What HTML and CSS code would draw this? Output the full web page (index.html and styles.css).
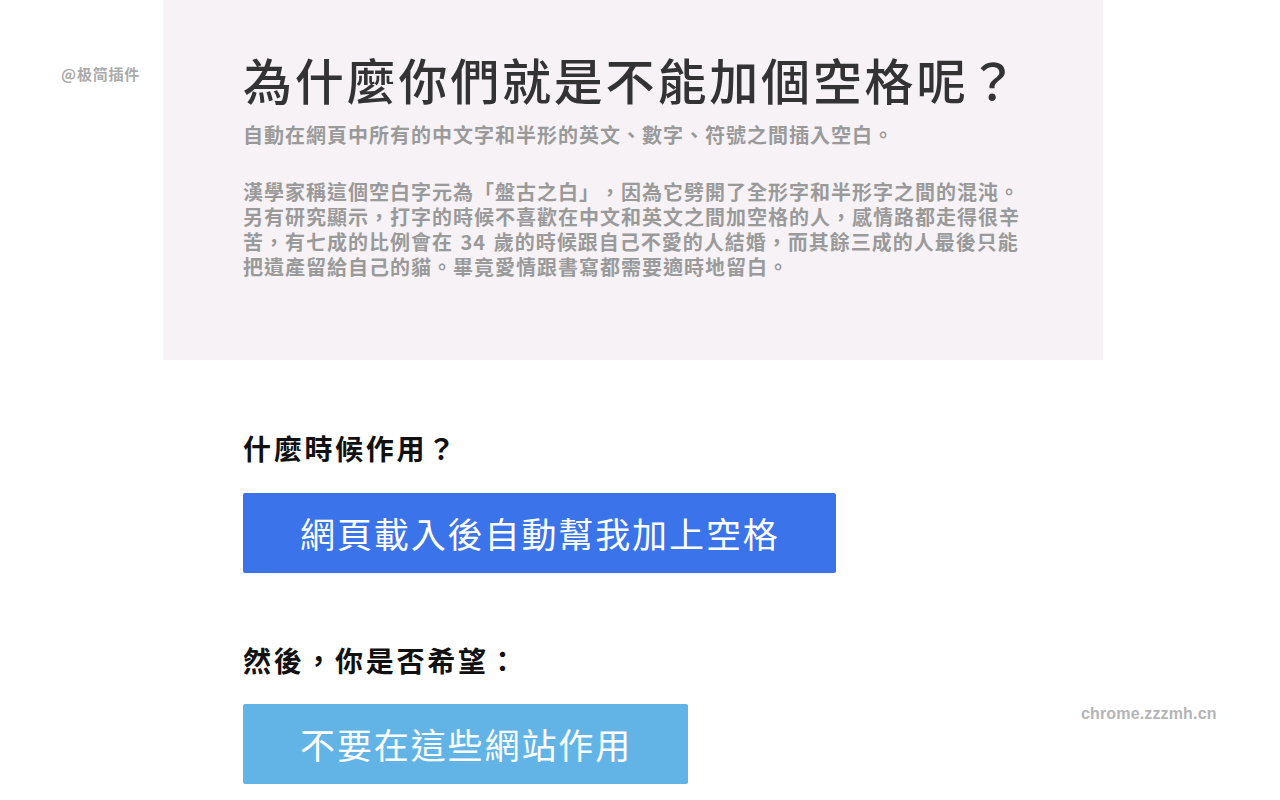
FILE: index.html
```html
<!DOCTYPE html>
<html lang="zh-Hant">
<head>
<meta charset="utf-8">
<title>為什麼你們就是不能加個空格呢？</title>
<link rel="stylesheet" href="styles.css">
</head>
<body>
<div class="watermark-left">@极简插件</div>
<div class="watermark-right">chrome.zzzmh.cn</div>
<header class="hero">
  <h1 class="hero-title">為什麼你們就是不能加個空格呢？</h1>
  <p class="hero-sub">自動在網頁中所有的中文字和半形的英文、數字、符號之間插入空白。</p>
  <p class="hero-text">漢學家稱這個空白字元為「盤古之白」，因為它劈開了全形字和半形字之間的混沌。另有研究顯示，打字的時候不喜歡在中文和英文之間加空格的人，感情路都走得很辛苦，有七成的比例會在 34 歲的時候跟自己不愛的人結婚，而其餘三成的人最後只能把遺產留給自己的貓。畢竟愛情跟書寫都需要適時地留白。</p>
</header>
<main class="options">
  <h2 class="opt-heading">什麼時候作用？</h2>
  <button class="btn btn-primary">網頁載入後自動幫我加上空格</button>
  <h2 class="opt-heading opt-heading-2">然後，你是否希望：</h2>
  <button class="btn btn-secondary">不要在這些網站作用</button>
</main>
</body>
</html>
```
FILE: styles.css
```css
html, body {
  margin: 0;
  padding: 0;
  background: #ffffff;
}
body {
  font-family: "Noto Sans CJK TC", "Liberation Sans", sans-serif;
  position: relative;
  min-height: 800px;
  text-spacing-trim: space-all;
}
.hero {
  margin-left: 163px;
  width: 940px;
  box-sizing: border-box;
  padding: 49px 82px 81px 80px;
  background: #f6f2f6;
}
.hero-title {
  margin: 0;
  font-size: 49px;
  line-height: 60px;
  letter-spacing: 2.8px;
  font-weight: 500;
  color: #333333;
  white-space: nowrap;
}
.hero-sub,
.hero-text {
  margin: 0;
  font-size: 20px;
  line-height: 25px;
  letter-spacing: 1px;
  font-weight: 700;
  color: #9a9a9a;
}
.hero-sub {
  margin-top: 13px;
}
.hero-text {
  margin-top: 32px;
  word-spacing: 2px;
}
.options {
  margin-left: 163px;
  padding: 68px 0 0 80px;
  display: flex;
  flex-direction: column;
  align-items: flex-start;
}
.opt-heading {
  margin: 0;
  font-size: 28px;
  line-height: 40px;
  letter-spacing: 2.7px;
  font-weight: 700;
  color: #111111;
}
.opt-heading-2 {
  margin-top: 67px;
}
.btn {
  margin: 25px 0 0 0;
  border: none;
  border-radius: 2px;
  height: 80px;
  padding: 0 56px 0 57px;
  font-family: "Noto Sans CJK TC", "Liberation Sans", sans-serif;
  font-size: 35px;
  letter-spacing: 1.9px;
  font-weight: 400;
  color: #ffffff;
  line-height: 80px;
  cursor: pointer;
}
.btn-primary {
  background: #3b73ea;
}
.btn-secondary {
  margin-top: 24px;
  background: #63b4e6;
}
.watermark-left {
  position: absolute;
  left: 61px;
  top: 63px;
  font-family: "Noto Sans CJK SC", sans-serif;
  font-size: 15px;
  line-height: 22px;
  letter-spacing: 0.8px;
  font-weight: 700;
  color: #ababab;
}
.watermark-right {
  position: absolute;
  left: 1081px;
  top: 704px;
  font-family: "Liberation Sans", sans-serif;
  font-size: 16px;
  line-height: 20px;
  letter-spacing: 0.15px;
  font-weight: 700;
  color: #b5b5b5;
}
```
